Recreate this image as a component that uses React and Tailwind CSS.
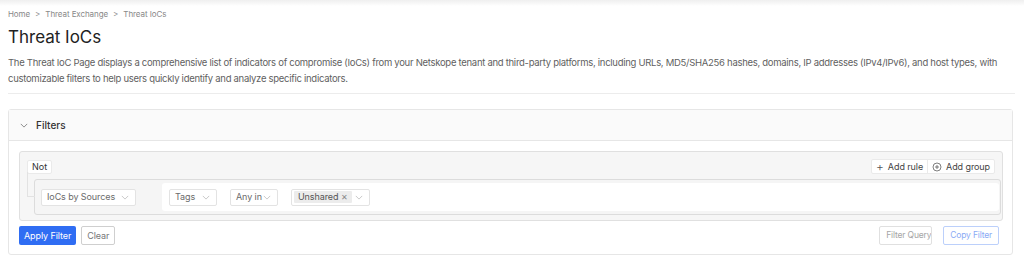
import React from 'react';

const Chevron = ({ className = '' }) => (
  <svg viewBox="0 0 10 6" className={`w-[8px] h-[5px] shrink-0 ${className}`} fill="none" stroke="currentColor" strokeWidth="0.9">
    <path d="M1 1l4 4 4-4" />
  </svg>
);

const Select = ({ label, className = '' }) => (
  <div className={`h-[17px] flex items-center justify-between whitespace-nowrap bg-white border border-[#e3e3e3] rounded-[2px] pl-[5px] pr-[6px] text-[9px] tracking-[-0.01em] text-[#6b6b6b] ${className}`}>
    <span>{label}</span>
    <Chevron className="text-[#b5b5b5]" />
  </div>
);

const App = () => {
  return (
    <div className="w-[1024px] h-[267px] overflow-hidden bg-white font-['Inter',sans-serif] text-[#333]">
      <div className="h-[6px] bg-gradient-to-b from-[#efefef] to-white" />
      <div className="px-2">
        <div className="flex items-center gap-[5px] text-[8px] leading-[12px] tracking-[-0.01em] text-[#888] mt-[2px]">
          <span>Home</span>
          <span>&gt;</span>
          <span>Threat Exchange</span>
          <span>&gt;</span>
          <span>Threat IoCs</span>
        </div>
        <h1 className="text-[17px] leading-[24px] text-[#222] mt-[5px]">Threat IoCs</h1>
        <p className="text-[9.5px] leading-[16px] tracking-[-0.03em] text-[#5f5f5f] mt-[6px] pr-[4px]">
          The Threat IoC Page displays a comprehensive list of indicators of compromise (IoCs) from your Netskope tenant and third-party platforms, including URLs, MD5/SHA256 hashes, domains, IP addresses (IPv4/IPv6), and host types, with customizable filters to help users quickly identify and analyze specific indicators.
        </p>
        <div className="border-t border-[#ececec] mt-[6px] mr-[1px]" />

        <div className="mt-[15px] mr-[3px] border border-[#e6e6e6] rounded-[3px]">
          <div className="h-[31px] bg-[#fafafa] border-b border-[#e6e6e6] flex items-center pl-[11px] gap-[8px]">
            <Chevron className="text-[#666]" />
            <span className="text-[10px] font-medium text-[#333]">Filters</span>
          </div>
          <div className="pt-[10px] pb-[9px] pl-[10px] pr-[9px]">
            <div className="relative bg-[#f6f6f6] border border-[#e0e0e0] rounded-[3px] pt-[7px] pb-[5px] pl-[7px] pr-[1px]">
              <div className="flex items-center justify-between pr-[6px]">
                <div className="h-[14px] px-[4px] flex items-center bg-white border border-[#eaeaea] rounded-[2px] text-[9px] text-[#333]">Not</div>
                <div className="flex items-stretch h-[15px] bg-white border border-[#eaeaea] rounded-[2px] text-[9px] tracking-[-0.01em] text-[#444] whitespace-nowrap">
                  <div className="flex items-center gap-[4px] px-[4px] border-r border-[#eaeaea]">
                    <span className="text-[12px] leading-none font-light text-[#555]">+</span>
                    <span>Add rule</span>
                  </div>
                  <div className="flex items-center gap-[4px] px-[4px]">
                    <svg viewBox="0 0 12 12" className="w-[10px] h-[10px]" fill="none" stroke="#555" strokeWidth="0.9">
                      <circle cx="6" cy="6" r="4.8" />
                      <path d="M6 3.6v4.8M3.6 6h4.8" />
                    </svg>
                    <span>Add group</span>
                  </div>
                </div>
              </div>
              <div className="absolute left-[7px] top-[20px] w-[8px] h-[25px] border-l border-b border-[#e2e2e2]" />
              <div className="ml-[7px] mt-[5px] h-[36px] flex items-center bg-[#f5f5f5] border border-[#dcdcdc] rounded-[3px] pl-[6px] pr-[1px]">
                <Select label="IoCs by Sources" className="w-[95px]" />
                <div className="ml-[26px] flex-1 h-[28px] bg-white rounded-[3px] flex items-center pl-[7px] gap-[13px]">
                  <Select label="Tags" className="w-[48px]" />
                  <Select label="Any in" className="w-[48px]" />
                  <div className="h-[17px] w-[79px] flex items-center justify-between bg-white border border-[#e3e3e3] rounded-[2px] pl-[2px] pr-[6px]">
                    <div className="h-[12px] flex items-center gap-[3px] bg-[#ececec] rounded-[1px] px-[4px] text-[9px] tracking-[-0.01em] text-[#555] whitespace-nowrap">
                      <span>Unshared</span>
                      <span className="text-[8px] text-[#888]">✕</span>
                    </div>
                    <Chevron className="text-[#b5b5b5]" />
                  </div>
                </div>
              </div>
            </div>
            <div className="flex items-center justify-between mt-[5px] pr-[4px] text-[9px] tracking-[-0.01em] whitespace-nowrap">
              <div className="flex gap-[5px]">
                <button className="h-[19px] px-[5px] bg-[#2f6df3] text-white rounded-[2px]">Apply Filter</button>
                <button className="h-[19px] px-[5px] bg-white border border-[#cfcfcf] text-[#777] rounded-[2px]">Clear</button>
              </div>
              <div className="flex gap-[11px] text-[8.5px] tracking-[-0.02em]">
                <button className="h-[19px] w-[53px] overflow-hidden text-left pl-[6px] bg-white border border-[#e0e0e0] text-[#a5a5a5] rounded-[2px]">Filter Query</button>
                <button className="h-[19px] px-[6px] bg-white border border-[#bcd0fb] text-[#8aaaf5] rounded-[2px]">Copy Filter</button>
              </div>
            </div>
          </div>
        </div>
      </div>
    </div>
  );
};

export default App;
